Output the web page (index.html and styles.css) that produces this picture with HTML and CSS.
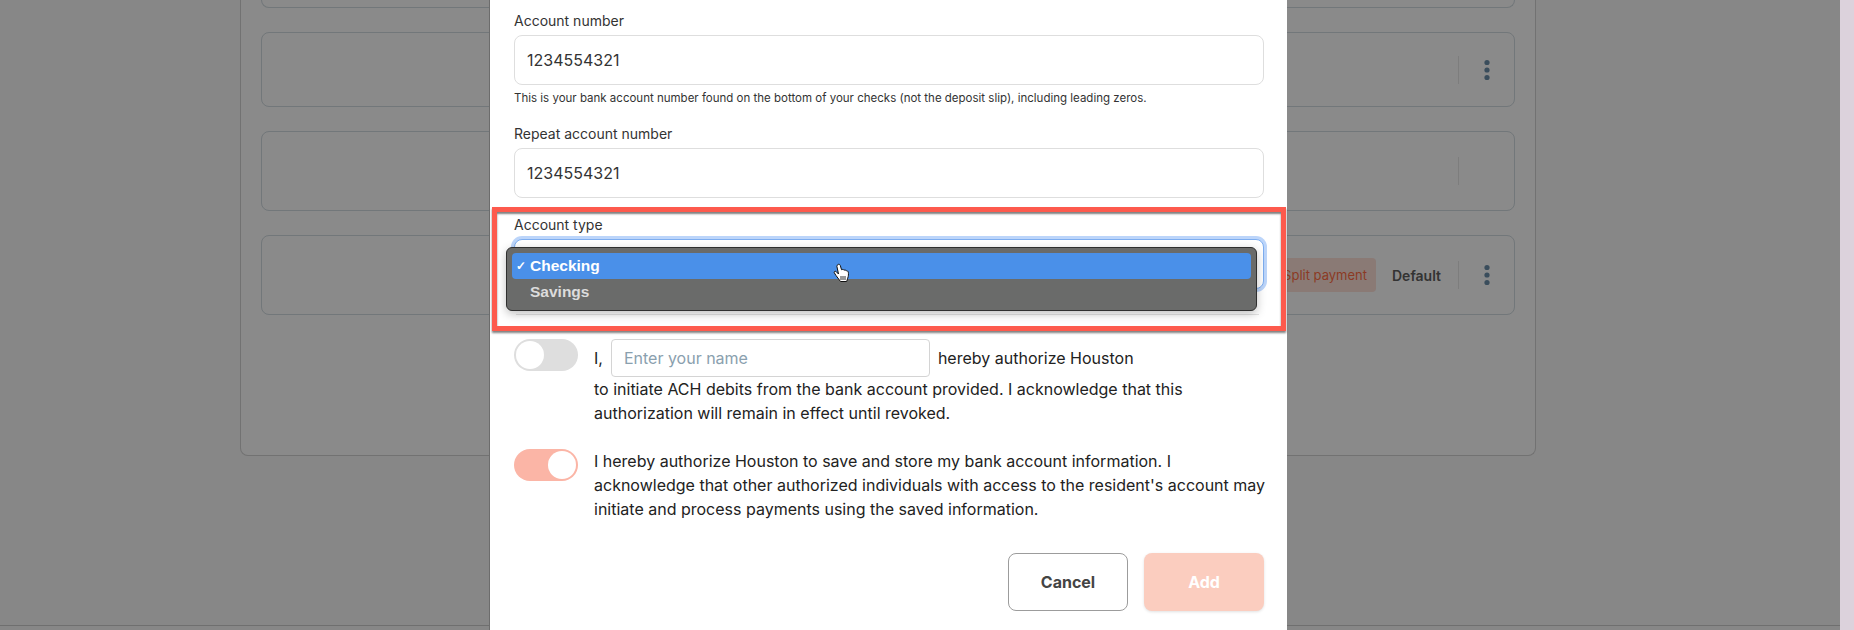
FILE: index.html
```html
<!DOCTYPE html>
<html lang="en">
<head>
    <meta charset="UTF-8">
    <meta name="viewport" content="width=device-width, initial-scale=1.0">
    <title>Add bank account</title>
    <link rel="stylesheet" href="styles.css">
</head>
<body>
    <div class="page">
        <main class="content">
            <section class="panel">
                <div class="method-card method-cut"></div>
                <div class="method-card method-short">
                    <span class="divider"></span>
                    <span class="more">
                        <svg width="8" height="22" viewBox="0 0 8 22"><circle cx="4" cy="3.5" r="2.6"/><circle cx="4" cy="11" r="2.6"/><circle cx="4" cy="18.5" r="2.6"/></svg>
                    </span>
                </div>
                <div class="method-card">
                    <span class="divider"></span>
                    <span class="more"></span>
                </div>
                <div class="method-card">
                    <span class="badge">Split payment</span>
                    <span class="default-label">Default</span>
                    <span class="divider"></span>
                    <span class="more">
                        <svg width="8" height="22" viewBox="0 0 8 22"><circle cx="4" cy="3.5" r="2.6"/><circle cx="4" cy="11" r="2.6"/><circle cx="4" cy="18.5" r="2.6"/></svg>
                    </span>
                </div>
            </section>
            <div class="footer-rule"></div>
        </main>
        <div class="strip"></div>

        <div class="overlay">
            <div class="modal">
                <label class="field-label">Account number</label>
                <div class="text-input">1234554321</div>
                <p class="hint">This is your bank account number found on the bottom of your checks (not the deposit slip), including leading zeros.</p>

                <label class="field-label label-repeat">Repeat account number</label>
                <div class="text-input">1234554321</div>

                <label class="field-label label-type">Account type</label>
                <div class="text-input select-focus"></div>

                <div class="consent consent-first">
                    <span class="toggle"><span class="knob"></span></span>
                    <div class="consent-text">
                        <div class="name-line">
                            <span>I,</span>
                            <span class="name-input">Enter your name</span>
                            <span>hereby authorize Houston</span>
                        </div>
                        to initiate ACH debits from the bank account provided. I acknowledge that this<br>
                        authorization will remain in effect until revoked.
                    </div>
                </div>

                <div class="consent">
                    <span class="toggle toggle-on"><span class="knob"></span></span>
                    <div class="consent-text">
                        I hereby authorize Houston to save and store my bank account information. I<br>
                        acknowledge that other authorized individuals with access to the resident's account may<br>
                        initiate and process payments using the saved information.
                    </div>
                </div>

                <div class="actions">
                    <button class="btn btn-cancel">Cancel</button>
                    <button class="btn btn-add">Add</button>
                </div>

                <!-- native select popup, annotation box and pointer sit over the form -->
                <div class="popup-line"></div>
                <div class="popup">
                    <div class="option option-active"><span class="check">✓</span>Checking</div>
                    <div class="option">Savings</div>
                </div>
                <div class="callout"></div>
                <svg class="pointer" width="18" height="20" viewBox="0 0 18 20">
                    <path d="M5 1.5c1-.6 2 0 2.300 1l1.200 4.200c1-.5 2-.3 2.500.5.900-.4 1.800-.2 2.300.6.900-.2 1.800.4 2 1.400.3 1.800.2 4-.6 6l-1 3.300H7.500L3 12.500 1.300 9.800c-.5-.9.600-2 1.600-1.400L5.500 11 3.900 3.400C3.800 2.600 4.300 1.800 5 1.500z" fill="#fff" stroke="#111" stroke-width="1"/>
                    <path d="M8 13v4M10 13v4M12 13v4" stroke="#333" stroke-width="1" fill="none"/>
                </svg>
            </div>
        </div>
    </div>
</body>
</html>
```
FILE: styles.css
```css
* {
    box-sizing: border-box;
}

html, body {
    margin: 0;
    height: 630px;
    overflow: hidden;
}

body {
    font-family: Inter, "Liberation Sans", sans-serif;
    background: #878787;
    color: #2b2b2b;
}

.page {
    position: relative;
    display: flex;
    height: 630px;
}

.content {
    flex: 1;
}

.strip {
    width: 14px;
    background: #dcd2dc;
}

/* dimmed page behind the modal */
.panel {
    display: flex;
    flex-direction: column;
    gap: 24px;
    width: 1296px;
    height: 456px;
    margin-left: 240px;
    padding: 0 20px;
    background: #8a8a8a;
    border: 1px solid #727272;
    border-top: 0;
    border-radius: 0 0 8px 8px;
}

.method-card {
    display: flex;
    align-items: center;
    justify-content: flex-end;
    height: 80px;
    background: #8a8a8a;
    border: 1px solid #72777a;
    border-radius: 8px;
}

.method-cut {
    height: 8px;
    border-top: 0;
    border-radius: 0 0 8px 8px;
}

.method-short {
    height: 75px;
}

.badge {
    display: flex;
    align-items: center;
    height: 34px;
    padding: 0 9px;
    margin-right: 16px;
    font-size: 13px;
    color: #8c3a24;
    background: #8a7a75;
    border-radius: 4px;
}

.default-label {
    margin-right: 17px;
    font-size: 14px;
    font-weight: 600;
    color: #333;
}

.divider {
    width: 1px;
    height: 28px;
    background: #7d7d7d;
}

.more {
    display: flex;
    align-items: center;
    justify-content: center;
    width: 55px;
    height: 22px;
    fill: #3a4d5c;
}

.footer-rule {
    margin-top: 169px;
    border-top: 1px solid #6f6f6f;
}

.overlay {
    position: absolute;
    top: 0;
    left: 0;
    right: 0;
    bottom: 0;
}

.modal {
    position: relative;
    width: 798px;
    height: 630px;
    margin-left: 489px;
    padding: 11px 24px 0;
    background: #fff;
    border-left: 1px solid #6c6c6c;
}

.field-label {
    display: block;
    height: 20px;
    margin-bottom: 4px;
    font-size: 14px;
    line-height: 20px;
    color: #333;
}

.label-repeat {
    margin-top: 18px;
}

.label-type {
    margin-top: 17px;
}

.text-input {
    display: flex;
    align-items: center;
    width: 750px;
    height: 50px;
    padding: 0 12px;
    font-size: 16px;
    color: #333;
    background: #fff;
    border: 1px solid #dedede;
    border-radius: 8px;
}

.select-focus {
    border-color: #7eaef0;
    box-shadow: 0 0 0 3px #bcd5fa;
}

.hint {
    height: 16px;
    margin: 5px 0 0;
    font-size: 11.500px;
    line-height: 16px;
    color: #333;
}

.consent {
    display: flex;
    gap: 16px;
    margin-top: 24px;
}

.consent-first {
    margin-top: 50px;
}

.toggle {
    flex: none;
    display: flex;
    width: 64px;
    height: 32px;
    padding: 2px;
    background: #dedede;
    border-radius: 16px;
}

.knob {
    width: 28px;
    height: 28px;
    background: #fff;
    border-radius: 50%;
}

.toggle-on {
    justify-content: flex-end;
    background: #fbb5a6;
}

.consent-text {
    font-size: 16px;
    line-height: 24px;
    white-space: nowrap;
    color: #222;
}

.name-line {
    display: flex;
    align-items: center;
    gap: 8px;
}

.name-input {
    display: flex;
    align-items: center;
    width: 319px;
    height: 38px;
    padding: 0 12px;
    color: #8aa0ae;
    border: 1px solid #d4d4d4;
    border-radius: 4px;
}

.actions {
    display: flex;
    justify-content: flex-end;
    gap: 16px;
    margin-top: 32px;
    width: 750px;
}

.btn {
    width: 120px;
    height: 58px;
    font-family: inherit;
    font-size: 16px;
    font-weight: 700;
    border-radius: 8px;
}

.btn-cancel {
    color: #444;
    background: #fff;
    border: 1px solid #9c9c9c;
}

.btn-add {
    color: #fff;
    background: #fbcdbf;
    border: 0;
    box-shadow: 0 1px 3px rgba(0, 0, 0, 0.12);
}

.popup-line {
    position: absolute;
    top: 314px;
    left: 26px;
    width: 743px;
    border-top: 1px solid #e4e4e4;
}

.popup {
    position: absolute;
    top: 247px;
    left: 16px;
    width: 751px;
    height: 64px;
    padding: 5px 5px 0;
    background: #6a6b6a;
    border: 1px solid #2f2f2f;
    border-radius: 6px;
    box-shadow: 0 3px 10px rgba(0, 0, 0, 0.25);
}

.option {
    display: flex;
    align-items: center;
    height: 26px;
    padding-left: 18px;
    font-family: "Liberation Sans", Arial, sans-serif;
    font-size: 15.500px;
    font-weight: 700;
    color: #dcdcdc;
}

.option-active {
    position: relative;
    color: #fff;
    background: #4a90e9;
    border-radius: 4px;
}

.check {
    position: absolute;
    left: 4px;
    font-size: 12px;
}

.callout {
    position: absolute;
    top: 207px;
    left: 2px;
    width: 794px;
    height: 124px;
    border: 5px solid #fd5a4d;
    box-shadow: 0 2px 2px rgba(0, 0, 0, 0.5), inset 0 2px 2px rgba(0, 0, 0, 0.5);
}

.pointer {
    position: absolute;
    top: 263px;
    left: 343px;
}
```
